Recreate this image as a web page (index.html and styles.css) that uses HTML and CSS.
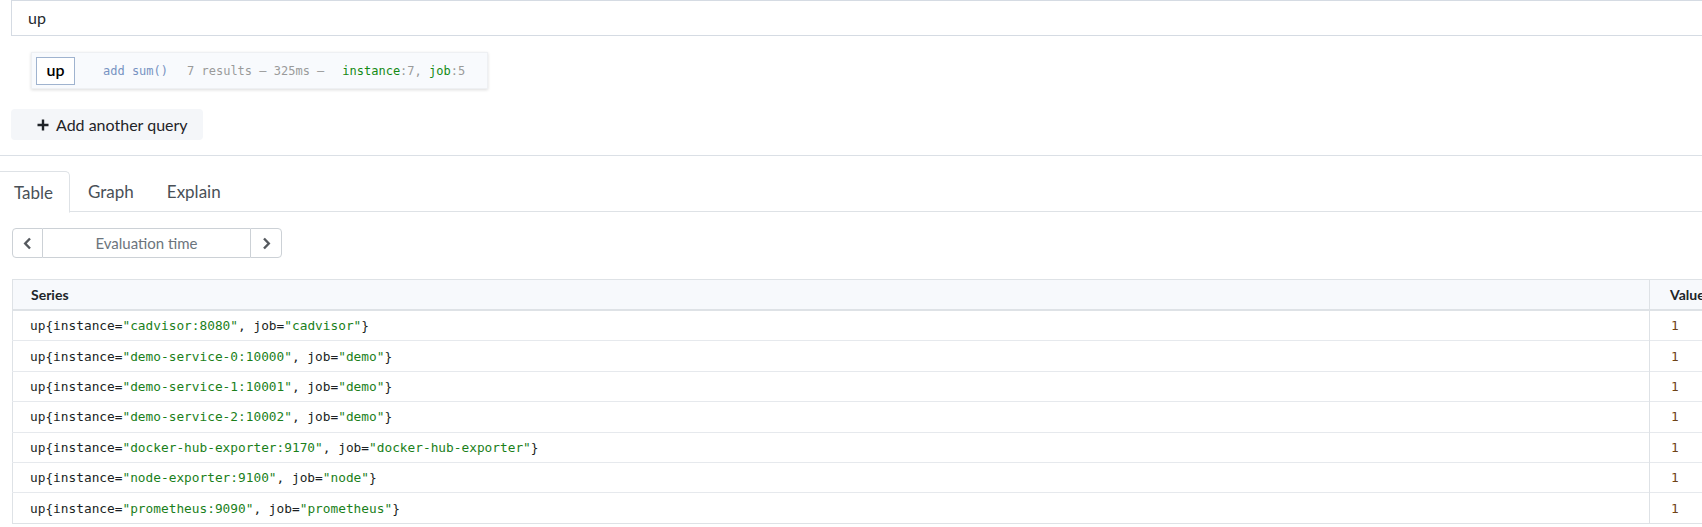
FILE: index.html
```html
<!DOCTYPE html>
<html>
<head>
<meta charset="utf-8">
<link rel="stylesheet" href="styles.css">
</head>
<body>
<div class="page">
  <div class="query-row">
    <div class="expr-input">up</div>
  </div>
  <div class="explain">
    <span class="explain-expr">up</span>
    <span class="explain-action">add sum()</span>
    <span class="explain-stats">7 results – 325ms –</span>
    <span class="explain-labels"><span class="lbl">instance</span>:7, <span class="lbl">job</span>:5</span>
  </div>
  <div class="add-row">
    <button class="add-btn">
      <svg class="plus" width="12" height="12" viewBox="0 0 12 12"><path d="M6 0.5V11.5M0.5 6H11.5" stroke="#1f2328" stroke-width="2.4" fill="none"/></svg>
      <span>Add another query</span>
    </button>
  </div>
  <div class="divider"></div>
  <div class="tabs">
    <div class="tab active">Table</div>
    <div class="tab">Graph</div>
    <div class="tab">Explain</div>
    <div class="tab-fill"></div>
  </div>
  <div class="eval-group">
    <button class="eval-btn">
      <svg width="9" height="13" viewBox="0 0 9 13"><path d="M7 1.5L2.2 6.5L7 11.5" stroke="#55595e" stroke-width="2.4" fill="none"/></svg>
    </button>
    <div class="eval-input">Evaluation time</div>
    <button class="eval-btn">
      <svg width="9" height="13" viewBox="0 0 9 13"><path d="M2 1.5L6.8 6.5L2 11.5" stroke="#55595e" stroke-width="2.4" fill="none"/></svg>
    </button>
  </div>
  <table class="results">
    <thead>
      <tr><th class="col-series">Series</th><th class="col-value">Value</th></tr>
    </thead>
    <tbody>
      <tr><td class="mono">up{instance=<span class="v">"cadvisor:8080"</span>, job=<span class="v">"cadvisor"</span>}</td><td class="mono num">1</td></tr>
      <tr><td class="mono">up{instance=<span class="v">"demo-service-0:10000"</span>, job=<span class="v">"demo"</span>}</td><td class="mono num">1</td></tr>
      <tr><td class="mono">up{instance=<span class="v">"demo-service-1:10001"</span>, job=<span class="v">"demo"</span>}</td><td class="mono num">1</td></tr>
      <tr><td class="mono">up{instance=<span class="v">"demo-service-2:10002"</span>, job=<span class="v">"demo"</span>}</td><td class="mono num">1</td></tr>
      <tr><td class="mono">up{instance=<span class="v">"docker-hub-exporter:9170"</span>, job=<span class="v">"docker-hub-exporter"</span>}</td><td class="mono num">1</td></tr>
      <tr><td class="mono">up{instance=<span class="v">"node-exporter:9100"</span>, job=<span class="v">"node"</span>}</td><td class="mono num">1</td></tr>
      <tr><td class="mono">up{instance=<span class="v">"prometheus:9090"</span>, job=<span class="v">"prometheus"</span>}</td><td class="mono num">1</td></tr>
    </tbody>
  </table>
</div>
</body>
</html>
```

FILE: styles.css
```css
html, body {
  margin: 0;
  padding: 0;
  background: #ffffff;
  overflow: hidden;
}
body {
  font-family: Lato, "Open Sans", sans-serif;
  color: #212529;
}
.page {
  width: 1760px;
}
.query-row {
  padding-left: 11px;
}
.expr-input {
  height: 34px;
  border: 1px solid #d5dbe3;
  border-right: none;
  box-sizing: content-box;
  padding-left: 16px;
  font-size: 16px;
  line-height: 33px;
  color: #24292e;
}
.explain {
  margin: 16px 0 0 31px;
  width: 455px;
  height: 35px;
  border: 1px solid #eef0f3;
  background: #f8fafd;
  box-shadow: 0 1px 3px rgba(0, 0, 0, 0.14);
  display: flex;
  align-items: center;
  font-family: "DejaVu Sans Mono", monospace;
  font-size: 12px;
}
.explain-expr {
  margin-left: 4px;
  width: 39px;
  height: 28px;
  box-sizing: border-box;
  border: 1px solid #9fb3cf;
  background: #ffffff;
  font-family: Lato, "Open Sans", sans-serif;
  font-size: 16px;
  font-weight: 600;
  color: #000;
  display: flex;
  align-items: center;
  justify-content: center;
  padding-bottom: 2px;
}
.explain-action {
  margin-left: 28px;
  color: #7793c2;
}
.explain-stats {
  margin-left: 19px;
  color: #9a9a9a;
}
.explain-labels {
  margin-left: 18px;
  color: #9a9a9a;
}
.lbl {
  color: #148a14;
}
.add-row {
  margin: 20px 0 0 11px;
}
.add-btn {
  width: 192px;
  height: 31px;
  border: none;
  border-radius: 4px;
  background: #f4f6f9;
  display: flex;
  align-items: center;
  padding: 0 0 0 26px;
  font-family: Lato, "Open Sans", sans-serif;
  font-size: 16px;
  color: #1f2328;
}
.plus {
  margin-right: 7px;
}
.divider {
  margin-top: 15px;
  height: 1px;
  background: #dbe0e6;
}
.tabs {
  margin-top: 15px;
  display: flex;
  height: 42px;
}
.tab {
  height: 41px;
  box-sizing: border-box;
  padding: 2px 13px 0;
  border-bottom: 1px solid #dee2e6;
  font-size: 17px;
  line-height: 38px;
  color: #495057;
}
.tab.active {
  width: 71px;
  margin-left: -1px;
  padding-left: 14px;
  border: 1px solid #dee2e6;
  border-bottom-color: #ffffff;
  border-top-right-radius: 5px;
  color: #495057;
  height: 42px;
}
.tab:nth-child(2) {
  padding-left: 18px;
  padding-right: 15px;
}
.tab:nth-child(3) {
  padding-left: 18px;
}
.tab-fill {
  flex: 1;
  height: 41px;
  box-sizing: border-box;
  border-bottom: 1px solid #dee2e6;
}
.eval-group {
  margin: 15px 0 0 12px;
  display: flex;
  width: 270px;
  height: 30px;
}
.eval-btn {
  width: 31px;
  height: 30px;
  padding: 0;
  border: 1px solid #ccd1d6;
  background: #ffffff;
  display: flex;
  align-items: center;
  justify-content: center;
}
.eval-btn:first-child {
  border-radius: 4px 0 0 4px;
}
.eval-btn:last-child {
  border-radius: 0 4px 4px 0;
  width: 32px;
}
.eval-input {
  flex: 1;
  height: 30px;
  box-sizing: border-box;
  border-top: 1px solid #ccd1d6;
  border-bottom: 1px solid #ccd1d6;
  font-size: 15px;
  line-height: 28px;
  text-align: center;
  color: #6c757d;
}
.results {
  margin: 21px 0 0 12px;
  width: 1748px;
  border-collapse: collapse;
  border: 1px solid #dee2e6;
}
.results th {
  height: 29px;
  padding: 0 0 0 18px;
  text-align: left;
  font-size: 14px;
  font-weight: 700;
  background: #f7f9fc;
  border-bottom: 2px solid #dee2e6;
  color: #212529;
}
.results th.col-value,
.results td.num {
  width: 88px;
  border-left: 1px solid #dee2e6;
  padding-left: 20px;
}
.results td.num {
  padding-left: 21px;
}
.results td {
  height: 29.4px;
  padding: 0 0 0 17px;
  border-top: 1px solid #e6e9ed;
}
.mono {
  font-family: "DejaVu Sans Mono", monospace;
  font-size: 12.8px;
  color: #1b1f23;
}
.v {
  color: #1b7f1b;
}
.num {
  color: #6e4216;
}
```
